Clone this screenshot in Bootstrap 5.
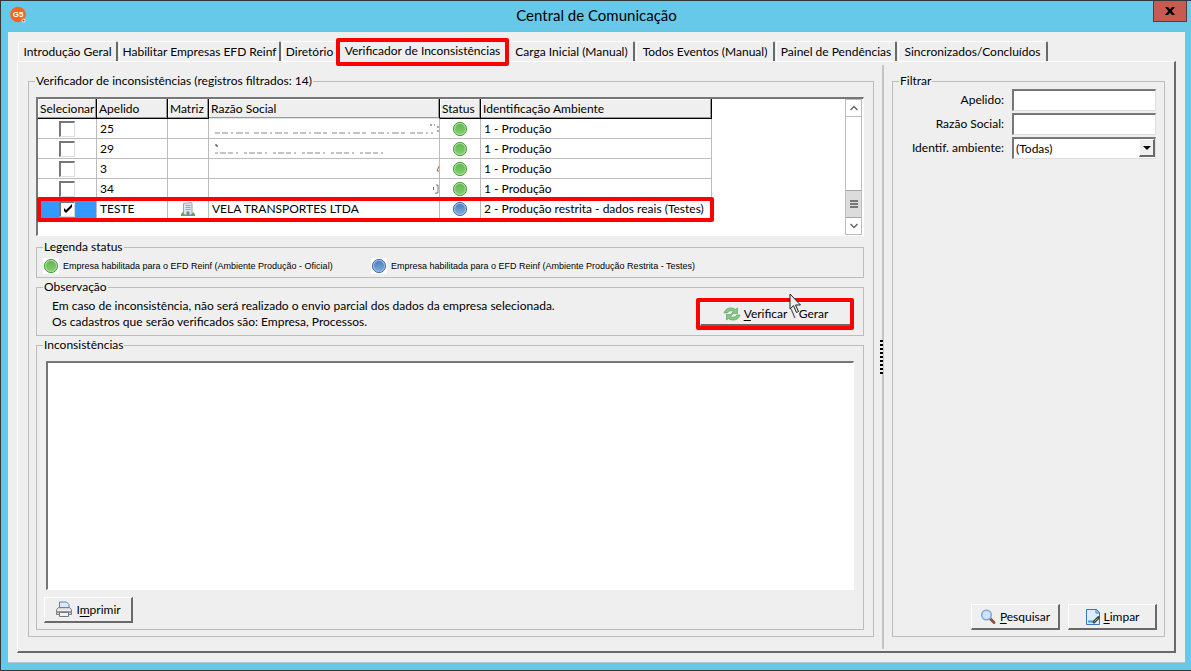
<!DOCTYPE html>
<html lang="pt-BR">
<head>
<meta charset="utf-8">
<meta name="viewport" content="width=device-width, initial-scale=1">
<title>Central de Comunicação</title>
<link href="https://cdn.jsdelivr.net/npm/bootstrap@5.3.0/dist/css/bootstrap.min.css" rel="stylesheet">
<style>
  :root { --face: #efefef; --line: #bcbcbc; --shade: #696969; --mark: #fe0000; }
  body { font: 12px/16px Lato, "Open Sans", sans-serif; color: #000; background: #66c9ea; }
  .window { border: 1px solid #33383b; border-right: 0; padding: 0 6px 7px 7px; }
  .titlebar { height: 30px; }
  .titlebar h1 { font-size: 15px; line-height: 28px; }
  .app-logo { left: 2px; top: 5px; }
  .close-btn { right: -2px; top: 0; width: 34px; height: 21px; background: #c75b52; border: 1px solid #5b3a3c; border-top: 0; padding: 0; line-height: 0; }
  .client { background: var(--face); border-top: 1px solid #8fb4c4; border-bottom: 1px solid #b3c6cd; padding: 9px; }

  .tabs { height: 20px; margin-left: 1px; gap: 1px; }
  .tab { height: 20px; padding: 0; border: 0; border-left: 1px solid #fff; border-top: 1px solid #fff; border-right: 2px solid var(--shade); background: var(--face); white-space: nowrap; line-height: 19px; text-align: center; border-radius: 2px 2px 0 0; }
  .tab.current { height: 28px; width: 173px; margin: -3px -1px 0 -3px; line-height: 16px; padding-bottom: 2px; position: relative; z-index: 1; border: 4px solid var(--mark); border-radius: 2px; }
  .pane { border: 1px solid #fff; border-right: 2px solid var(--shade); border-bottom: 2px solid var(--shade); padding: 3px 9px 2px 10px; }

  .group { border: 1px solid var(--line); min-width: 0; }
  .group > legend { float: none; width: auto; font-size: 12px; line-height: 16px; margin: 0 0 0 6px; padding: 0 1px; }
  .group.outer > legend, .group.issues > legend { margin-left: -1px; }
  .left-col { padding: 8px 8px 12px 0; }
  .outer { padding: 0 9px 6px 7px; }
  .sunken { border: 1px solid #fff; border-top: 2px solid #777; border-left: 2px solid #777; background: #fff; }
  .grid-box { height: 139px; margin-top: 8px; padding-right: 1px; }

  .records { table-layout: fixed; width: 674px; border-collapse: separate; border-spacing: 0; line-height: 16px; }
  .records th { height: 20px; padding: 0 0 0 2px; font-weight: 400; background: var(--face); border-right: 1px solid #000; border-bottom: 1px solid #000; box-shadow: inset -1px -1px #999, inset 1px 1px #fff; white-space: nowrap; }
  .records td { height: 20px; padding: 0 0 0 3px; border-right: 1px solid var(--line); border-bottom: 1px solid var(--line); white-space: nowrap; line-height: 16px; vertical-align: middle; }
  .records td.mid { padding: 0; text-align: center; }
  .records th.hidden-edge { border-bottom-color: #e4e4e4; }
  .records svg, .legend-item svg { display: block; margin: auto; }
  .records tr.chosen { position: relative; }
  .records tr.chosen::after { content: ""; position: absolute; inset: -2px -2px -3px -1px; border: 4px solid var(--mark); border-radius: 2px; }
  .records tr.chosen td:first-child { background: #3399ff; }
  .tick { appearance: none; display: block; margin: 0 auto; width: 16px; height: 16px; background: #fff; border: 2px solid #777; border-right: 1px solid #ddd; border-bottom: 1px solid #ddd; border-radius: 0; }
  .tick:checked { background: #fff url("data:image/svg+xml,%3Csvg xmlns='http://www.w3.org/2000/svg' viewBox='0 0 12 12'%3E%3Cpath d='M2 5v3l2 2 6-6V1L4 7z'/%3E%3C/svg%3E") center/12px 12px no-repeat; }

  .scroller { width: 17px; border: 1px solid var(--line); background: #fff; }
  .scroller button { height: 16px; padding: 0; border: 0; background: #fff; line-height: 0; }
  .scroller .up { border-bottom: 1px solid var(--line); height: 17px; }
  .scroller .thumb { height: 28px; background: #dcdcdc; border: 1px solid #a5a5a5; border-width: 1px 0; }

  .status-group { height: 39px; margin: 3px 0 1px; }
  .legend-row { padding: 3px 0 0 6px; gap: 26px; }
  .legend-item { font: 9px/16px "Liberation Sans", Arial, sans-serif; gap: 4px; }
  .legend-item.first { width: 302px; }
  .legend-item .dot { background: #fff; }
  .blurb { height: 57px; }
  .blurb p { margin: 3px 0 0 15px; }
  .marked { border: 4px solid var(--mark); border-radius: 2px; height: 32px; width: 158px; margin: 3px 9px 0 0; }
  .issues { padding: 0 9px 6px 7px; margin-top: 1px; }
  .issues textarea { resize: none; margin: 8px 0 7px 2px; min-height: 100px; border-radius: 0; }

  .cmd { height: 26px; padding: 0; gap: 3px; color: #000; background: var(--face); border: 1px solid #fff; border-right: 2px solid var(--shade); border-bottom: 2px solid var(--shade); font-size: 12px; line-height: 16px; white-space: nowrap; }
  .cmd u { text-underline-offset: 2px; }
  .w-89 { width: 89px; }
  .marked .cmd { height: 24px; border-right: 0; }
  .pointer { left: 89px; top: -9px; z-index: 2; pointer-events: none; }

  .splitter { width: 2px; background: #c4c4c4; }
  .grip { left: -2px; top: 275px; width: 3px; height: 34px; background: repeating-linear-gradient(#000 0 2px, #eee 2px 4px); }
  .right-col { width: 281px; padding: 8px 0 12px 8px; }
  .filter { padding: 0 7px 6px 9px; }
  .filter > legend { margin-left: -3px; }
  .filter .rows { gap: 2px; padding-right: 1px; }
  .filter label { width: 102px; text-align: right; }
  .field { width: 144px; height: 22px; padding: 0 2px; border: 2px solid #777; border-right: 1px solid #ddd; border-bottom: 1px solid #ddd; background: #fff; border-radius: 0; }
  select.field { appearance: none; line-height: 18px; }
  .drop { right: 1px; top: 2px; width: 16px; height: 18px; background: var(--face); border: 1px solid #fff; border-right: 2px solid var(--shade); border-bottom: 2px solid var(--shade); pointer-events: none; line-height: 0; }
</style>
</head>
<body>
<svg width="0" height="0" class="position-absolute" aria-hidden="true">
  <defs>
    <linearGradient id="gGreen" x2="0" y2="1"><stop stop-color="#62b84f"/><stop offset="1" stop-color="#80cc70"/></linearGradient>
    <linearGradient id="gBlue" x2="0" y2="1"><stop stop-color="#4d7fbd"/><stop offset="1" stop-color="#7ba8dc"/></linearGradient>
    <symbol id="dotGreen" viewBox="0 0 16 16"><circle cx="8" cy="8" r="6.6" fill="#a5dd98" stroke="#47a136"/><circle cx="8" cy="8" r="5" fill="url(#gGreen)"/></symbol>
    <symbol id="dotBlue" viewBox="0 0 16 16"><circle cx="8" cy="8" r="6.6" fill="#9abce4" stroke="#456fa8"/><circle cx="8" cy="8" r="5" fill="url(#gBlue)"/></symbol>
  </defs>
</svg>
<div class="window min-vh-100 d-flex flex-column">
  <header class="titlebar position-relative text-center">
    <svg class="app-logo position-absolute" width="18" height="18" viewBox="0 0 18 18"><circle cx="8" cy="8.5" r="7.8" fill="#f4661b"/><text x="8" y="11" font-family="Liberation Sans" font-size="8" font-weight="700" fill="#fff" text-anchor="middle">G5</text><circle cx="13.5" cy="14.5" r="2" fill="#f9e3da"/><circle cx="13.5" cy="14.5" r="1" fill="#b3453a"/></svg>
    <h1 class="m-0 fw-normal">Central de Comunicação</h1>
    <button class="close-btn position-absolute" type="button" aria-label="Fechar"><svg width="10" height="8" viewBox="0 0 10 8"><path d="M0 0h3l2 2.3L7 0h3L6.7 4 10 8H7L5 5.7 3 8H0l3.3-4z"/></svg></button>
  </header>

  <main class="client flex-fill d-flex flex-column">
    <nav class="tabs d-flex" role="tablist">
      <button class="tab" role="tab" style="width:100px">Introdução Geral</button>
      <button class="tab" role="tab" style="width:162px">Habilitar Empresas EFD Reinf</button>
      <button class="tab" role="tab" style="width:56px">Diretório</button>
      <button class="tab current" role="tab" aria-selected="true">Verificador de Inconsistências</button>
      <button class="tab" role="tab" style="width:126px">Carga Inicial (Manual)</button>
      <button class="tab" role="tab" style="width:139px">Todos Eventos (Manual)</button>
      <button class="tab" role="tab" style="width:121px">Painel de Pendências</button>
      <button class="tab" role="tab" style="width:150px">Sincronizados/Concluídos</button>
    </nav>

    <div class="pane flex-fill d-flex">
      <section class="left-col flex-fill d-flex">
        <fieldset class="group outer flex-fill d-flex flex-column">
          <legend>Verificador de inconsistências (registros filtrados: 14)</legend>

          <div class="sunken grid-box d-flex justify-content-between">
            <table class="records align-self-start">
              <colgroup><col style="width:59px"><col style="width:71px"><col style="width:41px"><col style="width:231px"><col style="width:41px"><col style="width:231px"></colgroup>
              <thead><tr><th>Selecionar</th><th>Apelido</th><th>Matriz</th><th class="hidden-edge">Razão Social</th><th>Status</th><th>Identificação Ambiente</th></tr></thead>
              <tbody>
                <tr><td class="mid"><input class="tick" type="checkbox" aria-label="Selecionar 25"></td><td>25</td><td></td>
                  <td><svg width="226" height="16"><path d="M2 12H220" stroke="#888" stroke-dasharray="5 2 6 3 2 3 7 2 4 5"/><path d="M217 4h5M225 5v8" stroke="#555" stroke-dasharray="2 2"/></svg></td>
                  <td class="mid"><svg width="16" height="16"><use href="#dotGreen"/></svg></td><td>1 - Produção</td></tr>
                <tr><td class="mid"><input class="tick" type="checkbox" aria-label="Selecionar 29"></td><td>29</td><td></td>
                  <td><svg width="226" height="16"><path d="M2 12H176" stroke="#888" stroke-dasharray="3 2 6 2 5 3 2 6"/><path d="M2 4h2v2" fill="none" stroke="#333"/></svg></td>
                  <td class="mid"><svg width="16" height="16"><use href="#dotGreen"/></svg></td><td>1 - Produção</td></tr>
                <tr><td class="mid"><input class="tick" type="checkbox" aria-label="Selecionar 3"></td><td>3</td><td></td>
                  <td><svg width="226" height="16"><path d="M226 5l-2 5h3" fill="none" stroke="#a63"/></svg></td>
                  <td class="mid"><svg width="16" height="16"><use href="#dotGreen"/></svg></td><td>1 - Produção</td></tr>
                <tr><td class="mid"><input class="tick" type="checkbox" aria-label="Selecionar 34"></td><td>34</td><td></td>
                  <td><svg width="226" height="16"><path d="M220.5 6v3M223 4h2v8h-3" fill="none" stroke="#777"/></svg></td>
                  <td class="mid"><svg width="16" height="16"><use href="#dotGreen"/></svg></td><td>1 - Produção</td></tr>
                <tr class="chosen"><td class="mid"><input class="tick" type="checkbox" aria-label="Selecionar TESTE" checked></td><td>TESTE</td>
                  <td class="mid"><svg width="16" height="16" viewBox="0 0 16 16"><path d="M3.500 2.500l8-1 .5 1V14H3.500z" fill="#dde5ee" stroke="#9aa5b3"/><path d="M5.500 4.500h5M5.500 6.500h5M5.500 8.500h5" stroke="#86a9d4"/><path d="M6.500 10.500h3V14h-3z" fill="#71859a"/><path d="M1 15v-2l2-2 2 3h6l2-3 2 2v2z" fill="#5fa84e"/></svg></td>
                  <td>VELA TRANSPORTES LTDA</td><td class="mid"><svg width="16" height="16"><use href="#dotBlue"/></svg></td><td>2 - Produção restrita - dados reais (Testes)</td></tr>
              </tbody>
            </table>
            <div class="scroller d-flex flex-column">
              <button class="up" type="button" aria-label="Subir"><svg width="8" height="6" viewBox="0 0 8 6"><path d="M.5 5L4 1.5 7.5 5" fill="none" stroke="#666" stroke-width="1.5"/></svg></button>
              <div class="flex-fill"></div>
              <div class="thumb d-flex justify-content-center align-items-center"><svg width="8" height="8"><path d="M0 1h8M0 4h8M0 7h8" stroke="#555" stroke-width="1.5"/></svg></div>
              <button class="down" type="button" aria-label="Descer"><svg width="8" height="6" viewBox="0 0 8 6"><path d="M.5 1L4 4.5 7.5 1" fill="none" stroke="#666" stroke-width="1.5"/></svg></button>
            </div>
          </div>

          <fieldset class="group status-group">
            <legend>Legenda status</legend>
            <div class="legend-row d-flex">
              <div class="legend-item first d-flex align-items-center"><span class="dot"><svg width="16" height="16"><use href="#dotGreen"/></svg></span>Empresa habilitada para o EFD Reinf (Ambiente Produção - Oficial)</div>
              <div class="legend-item d-flex align-items-center"><span class="dot"><svg width="16" height="16"><use href="#dotBlue"/></svg></span>Empresa habilitada para o EFD Reinf (Ambiente Produção Restrita - Testes)</div>
            </div>
          </fieldset>

          <fieldset class="group blurb">
            <legend>Observação</legend>
            <div class="d-flex justify-content-between">
              <p>Em caso de inconsistência, não será realizado o envio parcial dos dados da empresa selecionada.<br>Os cadastros que serão verificados são: Empresa, Processos.</p>
              <div class="marked position-relative">
                <button class="cmd w-100 d-flex align-items-center justify-content-center" type="button">
                  <svg width="18" height="16" viewBox="0 0 18 16"><path d="M1 7C2 3.500 5 1.500 9 2c1.500.2 2.800.8 3.500 1.500L14.500 2v5.500H8.500L10.500 5.500C8.500 4.200 5.500 4.500 4.500 7z" fill="#86c983" stroke="#4d9a55" stroke-width=".6"/><path d="M17 9c-1 3.500-4 5.500-8 5-1.500-.2-2.800-.8-3.500-1.500L3.500 14V8.500h6L7.500 10.500c2 1.300 5 1 6-1.500z" fill="#86c983" stroke="#4d9a55" stroke-width=".6"/></svg>
                  <span><u>V</u>erificar \ Gerar</span></button>
                <svg class="pointer position-absolute" width="14" height="22" viewBox="0 0 14 22"><path d="M1 1v15l3.500-3.300 3 6.800 2-1-3-6.500h5z" fill="#eee" stroke="#222"/></svg>
              </div>
            </div>
          </fieldset>

          <fieldset class="group issues flex-fill d-flex flex-column">
            <legend>Inconsistências</legend>
            <textarea class="sunken flex-fill" aria-label="Inconsistências" readonly></textarea>
            <div><button class="cmd w-89 d-flex align-items-center justify-content-center" type="button">
              <svg width="18" height="17" viewBox="0 0 18 17"><path d="M4.500 8V1h7l2.500 2.500V8z" fill="#d9ebfb" stroke="#4b85c5"/><path d="M1.500 8.500l2-2h11l2 2v5h-15z" fill="#d2d4d7" stroke="#7f8388"/><path d="M2 9h14" stroke="#fff"/><path d="M2 11h14" stroke="#999" stroke-width="2"/><path d="M4.500 11.500h9v4h-9z" fill="#eef5fc" stroke="#777"/></svg>
              <span>I<u>m</u>primir</span></button></div>
          </fieldset>
        </fieldset>
      </section>

      <div class="splitter position-relative"><div class="grip position-absolute"></div></div>

      <aside class="right-col d-flex">
        <fieldset class="group filter flex-fill d-flex flex-column justify-content-between">
          <legend>Filtrar</legend>
          <div class="rows d-flex flex-column">
            <div class="d-flex justify-content-between align-items-center"><label for="fApelido">Apelido:</label><input id="fApelido" class="field" type="text"></div>
            <div class="d-flex justify-content-between align-items-center"><label for="fRazao">Razão Social:</label><input id="fRazao" class="field" type="text"></div>
            <div class="d-flex justify-content-between align-items-center"><label for="fAmb">Identif. ambiente:</label>
              <div class="position-relative d-flex"><select id="fAmb" class="field"><option>(Todas)</option></select><span class="drop position-absolute d-flex align-items-center justify-content-center"><svg width="8" height="4"><path d="M0 0h8L4 4z"/></svg></span></div></div>
          </div>
          <div class="mt-auto d-flex justify-content-end gap-2">
            <button class="cmd w-89 d-flex align-items-center justify-content-center" type="button">
              <svg width="17" height="16" viewBox="0 0 17 16"><path d="M10 9.500l4 4" stroke="#8a5a38" stroke-width="3" stroke-linecap="round"/><circle cx="6.500" cy="6" r="4.800" fill="#cfe4fa" stroke="#7ba7df" stroke-width="1.500"/></svg>
              <span><u>P</u>esquisar</span></button>
            <button class="cmd w-89 d-flex align-items-center justify-content-center" type="button">
              <svg width="16" height="16" viewBox="0 0 16 16"><path d="M1.500.500h10l3 3v12h-13z" fill="#dcecfb" stroke="#3f74c0"/><path d="M11 .500v3.500h3.500z" fill="#fff" stroke="#3f74c0"/><path d="M3 12.500h7" stroke="#35a0e8" stroke-width="2"/><path d="M9 13l4.500-4.500" stroke="#444" stroke-width="3" stroke-linecap="round"/><path d="M9.500 12.500l3-3" stroke="#aaa"/></svg>
              <span><u>L</u>impar</span></button>
          </div>
        </fieldset>
      </aside>
    </div>
  </main>
</div>
<script src="https://cdn.jsdelivr.net/npm/bootstrap@5.3.0/dist/js/bootstrap.bundle.min.js"></script>
</body>
</html>
